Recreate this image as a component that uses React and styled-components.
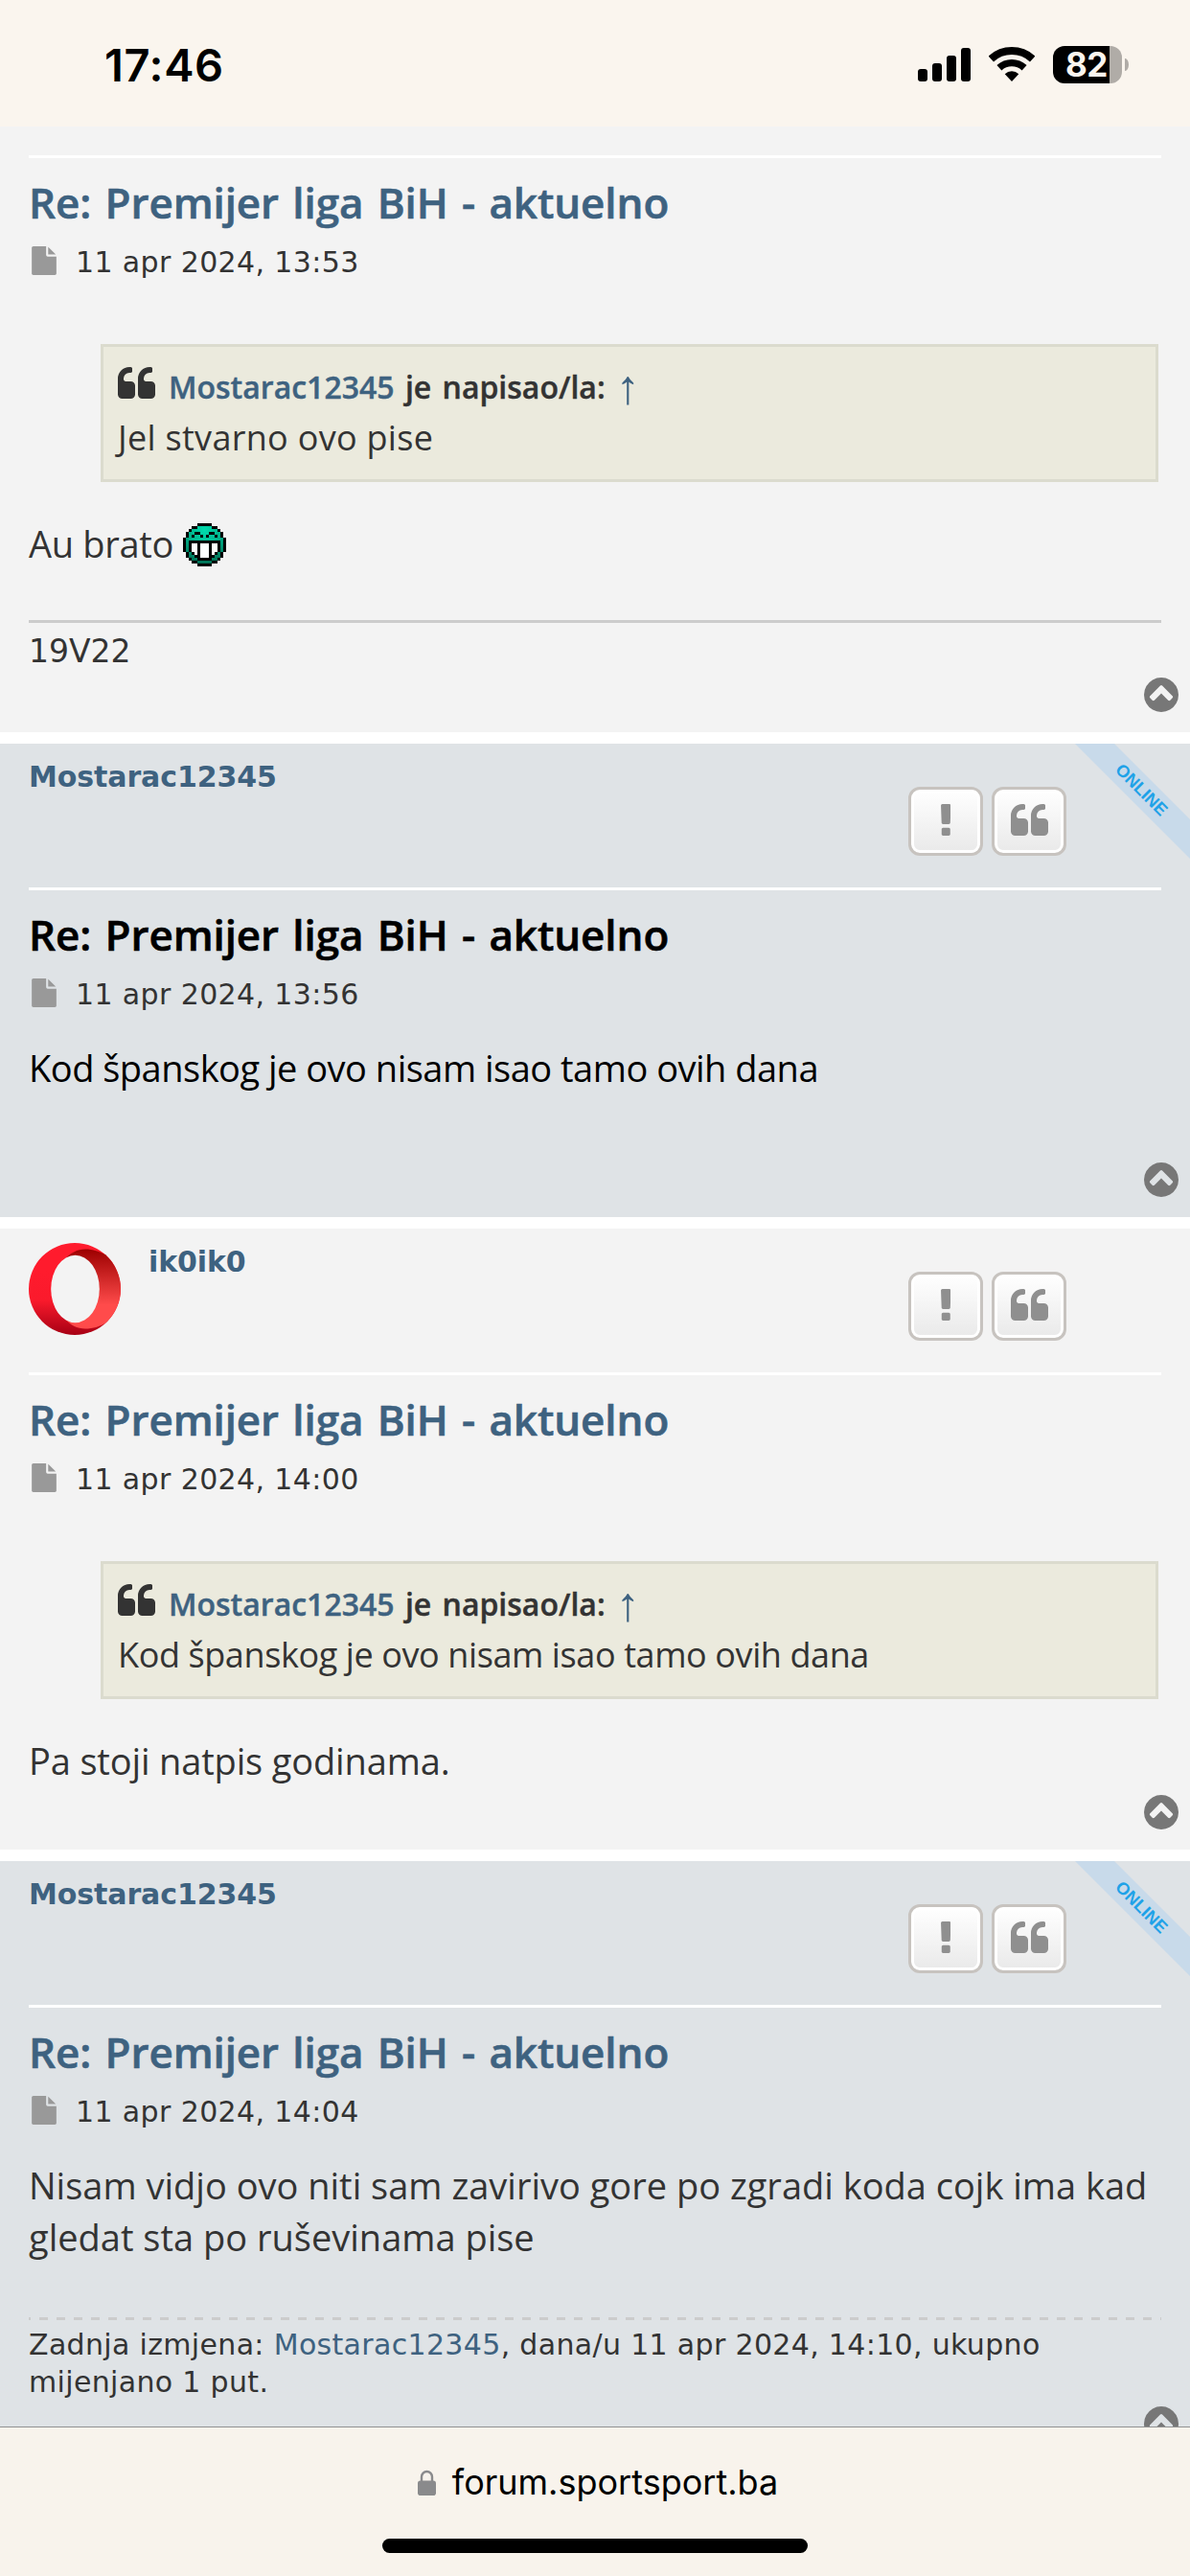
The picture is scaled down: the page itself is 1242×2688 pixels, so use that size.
import styled, { createGlobalStyle, css } from 'styled-components';

const posts = [
  {
    id: 1,
    title: 'Re: Premijer liga BiH - aktuelno',
    date: '11 apr 2024, 13:53',
    quote: { author: 'Mostarac12345', text: 'Jel stvarno ovo pise', tracking: '0.3px' },
    text: 'Au brato',
    smiley: true,
    signature: '19V22',
    scrolled: true,
  },
  {
    id: 2,
    author: 'Mostarac12345',
    online: true,
    title: 'Re: Premijer liga BiH - aktuelno',
    date: '11 apr 2024, 13:56',
    text: 'Kod španskog je ovo nisam isao tamo ovih dana',
    tracking: '-0.5px',
    active: true,
  },
  {
    id: 3,
    author: 'ik0ik0',
    avatar: true,
    title: 'Re: Premijer liga BiH - aktuelno',
    date: '11 apr 2024, 14:00',
    quote: {
      author: 'Mostarac12345',
      text: 'Kod španskog je ovo nisam isao tamo ovih dana',
      tracking: '-0.4px',
    },
    text: 'Pa stoji natpis godinama.',
    tracking: '-0.15px',
  },
  {
    id: 4,
    author: 'Mostarac12345',
    online: true,
    title: 'Re: Premijer liga BiH - aktuelno',
    date: '11 apr 2024, 14:04',
    text: 'Nisam vidjo ovo niti sam zavirivo gore po zgradi koda cojk ima kad gledat sta po ruševinama pise',
    tracking: '0px',
    edited: {
      by: 'Mostarac12345',
      rest: ', dana/u 11 apr 2024, 14:10, ukupno mijenjano 1 put.',
    },
  },
];

const smileyRows = [
  '.....KKKKK.....',
  '...KKGGGGGKK...',
  '..KGGGGGGGGGK..',
  '.KGGKKGGGKKGGK.',
  '.KGKGGKGKGGKGK.',
  'KGGGGGGGGGGGGGK',
  'KGKKKKKKKKKKKGK',
  'KGKWWKWWWKWWKGK',
  'KGKWWKWWWKWWKGK',
  'KGKWWKWWWKWWKGK',
  '.KGKWKWWWKWKGK.',
  '.KGGKKWWWKKGGK.',
  '..KGGKKKKKGGK..',
  '...KKGGGGGKK...',
  '.....KKKKK.....',
];
const smileyFill = { K: '#000', G: 'url(#smileyGreen)', W: '#fff' };

const Smiley = () => (
  <SmileySvg viewBox="0 0 15 15" shapeRendering="crispEdges">
    <defs>
      <radialGradient id="smileyGreen" gradientUnits="userSpaceOnUse" cx="7.5" cy="2.5" r="12">
        <stop offset="0" stopColor="#00dcae" />
        <stop offset="0.45" stopColor="#00b48c" />
        <stop offset="1" stopColor="#006a50" />
      </radialGradient>
    </defs>
    {smileyRows.map((row, y) =>
      [...row].map((c, x) =>
        c === '.' ? null : (
          <rect key={`${x}-${y}`} x={x} y={y} width="1" height="1" fill={smileyFill[c]} />
        )
      )
    )}
  </SmileySvg>
);

const OperaAvatar = () => (
  <Avatar viewBox="0 0 96 96">
    <defs>
      <linearGradient id="operaRing" x1="0" y1="0" x2="0" y2="1">
        <stop offset="0.3" stopColor="#ff1b2d" />
        <stop offset="0.62" stopColor="#fa1a2c" />
        <stop offset="1" stopColor="#a70014" />
      </linearGradient>
      <linearGradient id="operaInner" x1="0" y1="0" x2="0" y2="1">
        <stop offset="0" stopColor="#9c0000" />
        <stop offset="0.7" stopColor="#ff4b4b" />
      </linearGradient>
    </defs>
    <circle cx="48" cy="48" r="48" fill="url(#operaRing)" />
    <path
      d="M36 19C43 10 51 6.5 59 6.5C67 6.5 74 9 80 12.3A48 48 0 0 1 80 83.7C74 87 67 89.5 59 89.5C51 89.5 43 86 36 77Z"
      fill="url(#operaInner)"
    />
    <ellipse cx="48.5" cy="48" rx="25.3" ry="35.3" fill="#f3f3f3" />
  </Avatar>
);

const QuoteIcon = () => (
  <QuoteSvg viewBox="0 128 1664 1408">
    <path d="M768 960v384q0 80-56 136t-136 56H192q-80 0-136-56T0 1344V640q0-104 40.5-198.5T150 278t163.5-109.5T512 128h64q26 0 45 19t19 45v128q0 26-19 45t-45 19h-64q-106 0-181 75t-75 181v32q0 40 28 68t68 28h224q80 0 136 56t56 136zm896 0v384q0 80-56 136t-136 56h-384q-80 0-136-56t-56-136V640q0-104 40.5-198.5T1046 278t163.5-109.5T1408 128h64q26 0 45 19t19 45v128q0 26-19 45t-45 19h-64q-106 0-181 75t-75 181v32q0 40 28 68t68 28h224q80 0 136 56t56 136z" />
  </QuoteSvg>
);

const ExclamationIcon = () => (
  <ExclamationSvg viewBox="672 128 448 1408">
    <path d="M1088 1248v224q0 26-19 45t-45 19H768q-26 0-45-19t-19-45v-224q0-26 19-45t45-19h256q26 0 45 19t19 45zm30-1056l-28 768q-1 26-20.500 45t-45.500 19H768q-26 0-45.500-19t-20.500-45L674 192q-1-26 17.500-45t44.500-19h320q26 0 44.500 19t17.500 45z" />
  </ExclamationSvg>
);

const FileIcon = () => (
  <FileSvg viewBox="128 0 1536 1792">
    <path d="M1152 512V40q22 14 36 28l408 408q14 14 28 36h-472zm-128 32q0 40 28 68t68 28h544v1056q0 40-28 68t-68 28H224q-40 0-68-28t-28-68V96q0-40 28-68t68-28h800v544z" />
  </FileSvg>
);

const TopIcon = () => (
  <TopSvg viewBox="128 128 1536 1536">
    <path d="M1293 1139l102-102q19-19 19-45t-19-45L941 493q-19-19-45-19t-45 19L397 947q-19 19-19 45t19 45l102 102q19 19 45 19t45-19l307-307 307 307q19 19 45 19t45-19zm371-243q0 209-103 385.500T1281.500 1561 896 1664t-385.500-103T231 1281.500 128 896t103-385.500T510.500 231 896 128t385.500 103T1561 510.500 1664 896z" />
  </TopSvg>
);

const StatusBar = () => (
  <StatusBarWrap>
    <Clock>17:46</Clock>
    <StatusIcons>
      <Signal>
        <SignalBar $h={13} />
        <SignalBar $h={19} />
        <SignalBar $h={27} />
        <SignalBar $h={35} />
      </Signal>
      <WifiSvg viewBox="-72 -108 144 108">
        <path d="M-65-70.600A96 96 0 0 1 65-70.600" fill="none" stroke="#000" strokeWidth="24" />
        <path d="M-39.300-42.600A58 58 0 0 1 39.300-42.600" fill="none" stroke="#000" strokeWidth="22" />
        <path d="M0 0L-21.700-23.500A32 32 0 0 1 21.700-23.500Z" />
      </WifiSvg>
      <Battery>
        <BatteryBody>82</BatteryBody>
        <BatteryNub />
      </Battery>
    </StatusIcons>
  </StatusBarWrap>
);

const Post = ({ post }) => (
  <PostWrap $shaded={post.online}>
    {post.online && (
      <RibbonCorner>
        <Ribbon>ONLINE</Ribbon>
      </RibbonCorner>
    )}
    <PostHead $scrolled={post.scrolled}>
      {!post.scrolled && (
        <>
          {post.avatar && <OperaAvatar />}
          <Username>{post.author}</Username>
          <PostButtons>
            <IconButton aria-label="Prijavi">
              <ExclamationIcon />
            </IconButton>
            <IconButton aria-label="Citiraj">
              <QuoteIcon />
            </IconButton>
          </PostButtons>
        </>
      )}
    </PostHead>
    <PostBody>
      <Title $active={post.active}>{post.title}</Title>
      <PostDate>
        <FileIcon />
        {post.date}
      </PostDate>
      <Content $active={post.active} $tracking={post.tracking}>
        {post.quote && (
          <Quote $tracking={post.quote.tracking}>
            <cite>
              <QuoteIcon />
              <a>{post.quote.author}</a> je napisao/la: <Arrow>↑</Arrow>
            </cite>
            {post.quote.text}
          </Quote>
        )}
        {post.text} {post.smiley && <Smiley />}
      </Content>
      {post.edited && (
        <Notice>
          Zadnja izmjena: <a>{post.edited.by}</a>
          {post.edited.rest}
        </Notice>
      )}
      {post.signature && <Signature>{post.signature}</Signature>}
    </PostBody>
    <BackToTop>
      <TopIcon />
    </BackToTop>
  </PostWrap>
);

const App = () => (
  <>
    <GlobalStyle />
    <Screen>
      <StatusBar />
      <Thread>
        {posts.map((post) => (
          <Post key={post.id} post={post} />
        ))}
      </Thread>
      <AddressBar>
        <Address>
          <LockSvg viewBox="0 0 19 27">
            <path d="M4 13V7.500a5.500 5.500 0 0 1 11 0V13" fill="none" stroke="#8a8a8c" strokeWidth="2.400" />
            <rect x="0" y="11.500" width="19" height="15.500" rx="2.800" fill="#8a8a8c" />
          </LockSvg>
          forum.sportsport.ba
        </Address>
        <HomeIndicator />
      </AddressBar>
    </Screen>
  </>
);
export default App;

const GlobalStyle = createGlobalStyle`
  * {
    box-sizing: border-box;
  }
  body {
    margin: 0;
    background: #fff;
  }
  svg {
    flex: none;
  }
`;

const verdana = css`
  font-family: 'DejaVu Sans', sans-serif;
`;
const trebuchet = css`
  font-family: 'Open Sans', sans-serif;
`;
const system = css`
  font-family: Inter, sans-serif;
`;

const Screen = styled.div`
  display: flex;
  flex-direction: column;
  width: 1242px;
  height: 2688px;
  overflow: hidden;
`;

// status bar
const StatusBarWrap = styled.header`
  flex: none;
  display: flex;
  justify-content: space-between;
  height: 132px;
  padding: 48px 64px 0 109px;
  background: #faf5ee;
  color: #000;
  ${system}
`;
const Clock = styled.div`
  margin-top: -8px;
  font-size: 47px;
  font-weight: 600;
  line-height: 56px;
  letter-spacing: 0.6px;
`;
const StatusIcons = styled.div`
  display: flex;
  gap: 19px;
  height: 39px;
`;
const Signal = styled.div`
  display: flex;
  align-items: flex-end;
  gap: 5px;
  height: 37px;
`;
const SignalBar = styled.i`
  width: 10px;
  height: ${({ $h }) => $h}px;
  border-radius: 3px;
  background: #000;
`;
const WifiSvg = styled.svg`
  width: 48px;
  height: 36px;
  margin-top: 1px;
`;
const Battery = styled.div`
  display: flex;
  align-items: center;
  gap: 3px;
`;
const BatteryBody = styled.div`
  width: 72px;
  height: 39px;
  padding-left: 13px;
  border-radius: 12px;
  background: linear-gradient(90deg, #000 59px, #b0aca7 59px);
  color: #faf5ee;
  font-size: 35px;
  font-weight: 700;
  line-height: 39px;
  letter-spacing: -0.5px;
`;
const BatteryNub = styled.i`
  width: 4px;
  height: 13px;
  border-radius: 0 4px 4px 0 / 0 7px 7px 0;
  background: #b0aca7;
`;

// thread
const Thread = styled.main`
  flex: 1;
  min-height: 0;
  display: flex;
  flex-direction: column;
  gap: 12px;
  overflow: hidden;
  background: #fff;
  color: #333;
  a {
    color: #3e6280;
  }
`;
const PostWrap = styled.article`
  flex: none;
  position: relative;
  padding: 0 30px 66px;
  background: ${({ $shaded }) => ($shaded ? '#dfe3e6' : '#f3f3f3')};
`;
const PostHead = styled.div`
  display: flex;
  height: ${({ $scrolled }) => ($scrolled ? 30 : 150)}px;
`;
const Avatar = styled.svg`
  width: 96px;
  height: 96px;
  margin: 15px 29px 0 0;
`;
const Username = styled.div`
  flex: 1;
  padding-top: 17px;
  color: #3e6280;
  ${verdana}
  font-size: 30px;
  font-weight: 700;
  line-height: 36px;
  letter-spacing: -0.1px;
`;
const PostButtons = styled.div`
  display: flex;
  gap: 9px;
  margin: 45px 99px 0 0;
`;
const IconButton = styled.button`
  display: flex;
  align-items: center;
  justify-content: center;
  width: 78px;
  height: 72px;
  padding: 0 0 3px;
  border: 3px solid #c7c3bf;
  border-radius: 12px;
  background: linear-gradient(#fff, #e9e9e9);
  box-shadow: inset 0 0 0 3px #fff;
  fill: #8f8f8f;
`;
const RibbonCorner = styled.div`
  position: absolute;
  top: 0;
  right: 0;
  width: 120px;
  height: 120px;
  overflow: hidden;
`;
const Ribbon = styled.div`
  position: absolute;
  top: 34px;
  left: -31px;
  width: 200px;
  height: 29px;
  background: #c8daea;
  color: #1fa2e8;
  font-family: 'Liberation Sans', sans-serif;
  font-size: 18px;
  font-weight: 700;
  line-height: 29px;
  text-align: center;
  transform: rotate(45deg);
`;
const PostBody = styled.div`
  border-top: 3px solid #fff;
`;
const Title = styled.h3`
  margin: 19px 0 17px;
  color: ${({ $active }) => ($active ? '#000' : '#3e6280')};
  ${trebuchet}
  font-size: 44px;
  font-weight: 600;
  line-height: 55px;
  letter-spacing: -0.1px;
  word-spacing: 3px;
  -webkit-text-stroke: 0.6px currentColor;
`;
const PostDate = styled.div`
  display: flex;
  align-items: center;
  ${verdana}
  font-size: 30px;
  line-height: 36px;
  letter-spacing: 0.38px;
`;
const Content = styled.div`
  display: flow-root;
  min-height: 117px;
  margin-top: 31px;
  color: ${({ $active }) => ($active ? '#000' : '#333')};
  ${trebuchet}
  font-size: 38px;
  line-height: 54px;
  letter-spacing: ${({ $tracking }) => $tracking || '-0.3px'};
`;
const Quote = styled.blockquote`
  margin: 36px 3px 37px 75px;
  padding: 15px 15px 16px;
  border: 3px solid #dbdbce;
  background: #ebeadd;
  font-size: 36px;
  letter-spacing: ${({ $tracking }) => $tracking};
  cite {
    display: block;
    height: 53px;
    font-size: 32px;
    font-style: normal;
    font-weight: 600;
    letter-spacing: 0;
    word-spacing: 3px;
    -webkit-text-stroke: 0.4px currentColor;
    svg {
      margin-right: 14px;
      fill: #333;
    }
  }
`;
const Arrow = styled.a`
  position: relative;
  top: 5px;
  font-family: 'Liberation Serif', serif;
  font-size: 50px;
  font-weight: 400;
  line-height: 0;
  -webkit-text-stroke: 0;
`;
const Signature = styled.div`
  margin: 53px 0 -3px;
  padding-top: 9px;
  border-top: 3px solid #ccc;
  ${verdana}
  font-size: 33px;
  line-height: 42px;
`;
const Notice = styled.div`
  margin: 48px 0 -3px;
  padding-top: 9px;
  background: linear-gradient(90deg, #ccc 50%, transparent 50%) 11px 0 / 18px 3px repeat-x;
  ${verdana}
  font-size: 30px;
  line-height: 39px;
  letter-spacing: 0.33px;
`;
const BackToTop = styled.a`
  position: absolute;
  right: 12px;
  bottom: 21px;
  display: flex;
`;

// icons
const QuoteSvg = styled.svg`
  width: 39px;
  height: 33px;
`;
const ExclamationSvg = styled.svg`
  width: 10.5px;
  height: 33px;
`;
const FileSvg = styled.svg`
  width: 26px;
  height: 30px;
  margin: -4px 20px 0 3px;
  fill: #999;
`;
const TopSvg = styled.svg`
  width: 36px;
  height: 36px;
  fill: #777;
`;
const SmileySvg = styled.svg`
  width: 45px;
  height: 45px;
  vertical-align: -9px;
`;

// browser bar
const AddressBar = styled.footer`
  flex: none;
  height: 156px;
  padding-top: 35px;
  border-top: 1px solid #929292;
  background: #f8f3ec;
  color: #000;
  ${system}
`;
const Address = styled.div`
  display: flex;
  align-items: center;
  justify-content: center;
  gap: 17px;
  padding-left: 6px;
  font-size: 36px;
  line-height: 44px;
`;
const LockSvg = styled.svg`
  width: 19px;
  height: 27px;
`;
const HomeIndicator = styled.div`
  width: 444px;
  height: 15px;
  margin: 37px auto 0;
  border-radius: 8px;
  background: #000;
`;
